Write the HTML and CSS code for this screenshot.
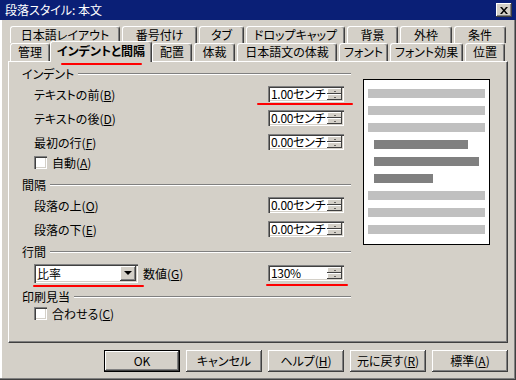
FILE: index.html
```html
<!DOCTYPE html>
<html lang="ja">
<head>
  <meta charset="UTF-8" />
  <title>段落スタイル: 本文</title>
  <link rel="stylesheet" href="styles.css">
</head>
<body>
  <div class="window">
    <div class="titlebar">
      <span class="title">段落スタイル: 本文</span>
      <span class="close">
        <svg width="8" height="7" viewBox="0 0 8 7"><path d="M0 0h2l2 2.5L6 0h2L5 3.5 8 7H6L4 4.5 2 7H0l3-3.5z" fill="#000"/></svg>
      </span>
    </div>

    <div class="tabs">
      <div class="tabrow back">
        <div class="tab">日本語レイアウト</div>
        <div class="tab">番号付け</div>
        <div class="tab">タブ</div>
        <div class="tab">ドロップキャップ</div>
        <div class="tab">背景</div>
        <div class="tab">外枠</div>
        <div class="tab">条件</div>
      </div>
      <div class="tabrow front">
        <div class="tab">管理</div>
        <div class="tab active mark">インデントと間隔</div>
        <div class="tab">配置</div>
        <div class="tab">体裁</div>
        <div class="tab">日本語文の体裁</div>
        <div class="tab">フォント</div>
        <div class="tab">フォント効果</div>
        <div class="tab">位置</div>
      </div>
    </div>

    <div class="panel">
      <div class="settings">
        <div class="group-title">インデント</div>
        <div class="row">
          <span class="label">テキストの前(<u>B</u>)</span>
          <div class="spin mark mark-first"><span class="value">1.00センチ</span><span class="arrows"><i class="up"></i><i class="down"></i></span></div>
        </div>
        <div class="row">
          <span class="label">テキストの後(<u>D</u>)</span>
          <div class="spin"><span class="value">0.00センチ</span><span class="arrows"><i class="up"></i><i class="down"></i></span></div>
        </div>
        <div class="row">
          <span class="label">最初の行(<u>F</u>)</span>
          <div class="spin"><span class="value">0.00センチ</span><span class="arrows"><i class="up"></i><i class="down"></i></span></div>
        </div>
        <div class="check-row">
          <span class="checkbox"></span>
          <span>自動(<u>A</u>)</span>
        </div>

        <div class="group-title gap-big">間隔</div>
        <div class="row">
          <span class="label">段落の上(<u>O</u>)</span>
          <div class="spin"><span class="value">0.00センチ</span><span class="arrows"><i class="up"></i><i class="down"></i></span></div>
        </div>
        <div class="row">
          <span class="label">段落の下(<u>E</u>)</span>
          <div class="spin"><span class="value">0.00センチ</span><span class="arrows"><i class="up"></i><i class="down"></i></span></div>
        </div>

        <div class="group-title gap-small">行間</div>
        <div class="row combo-row">
          <div class="combo mark mark-combo">
            <span class="value">比率</span>
            <span class="drop"><i></i></span>
          </div>
          <span class="label amount">数値(<u>G</u>)</span>
          <div class="spin mark mark-pct"><span class="value">130%</span><span class="arrows"><i class="up"></i><i class="down"></i></span></div>
        </div>

        <div class="group-title gap-small">印刷見当</div>
        <div class="check-row">
          <span class="checkbox"></span>
          <span>合わせる(<u>C</u>)</span>
        </div>
      </div>

      <div class="preview">
        <div class="bar"></div>
        <div class="bar"></div>
        <div class="bar"></div>
        <div class="bar dark b1"></div>
        <div class="bar dark b2"></div>
        <div class="bar dark b3"></div>
        <div class="bar"></div>
        <div class="bar"></div>
        <div class="bar"></div>
      </div>
    </div>

    <div class="buttons">
      <button class="btn default">OK</button>
      <button class="btn">キャンセル</button>
      <button class="btn">ヘルプ(<u>H</u>)</button>
      <button class="btn">元に戻す(<u>R</u>)</button>
      <button class="btn">標準(<u>A</u>)</button>
    </div>
  </div>
</body>
</html>
```

FILE: styles.css
```css
body {
  margin: 0;
  background: #d4d0c8;
  font-family: "Noto Sans CJK JP", "Noto Sans", sans-serif;
  font-size: 12px;
  font-feature-settings: "palt";
  color: #000;
}
u {
  text-decoration-thickness: 1px;
  text-underline-offset: 1px;
}
.window {
  width: 516px;
  height: 380px;
  box-sizing: border-box;
  background: #d4d0c8;
  box-shadow: inset -1px -1px #404040, inset -2px -2px #808080, inset 2px 0 #fff;
  overflow: hidden;
}
.titlebar {
  height: 20px;
  background: #0a1f76;
  color: #fff;
  display: flex;
  align-items: center;
  justify-content: space-between;
  padding: 0 5px;
}
.title {
  font-size: 12px;
  line-height: 14px;
}
.close {
  width: 16px;
  height: 14px;
  box-sizing: border-box;
  background: #d4d0c8;
  box-shadow: inset -1px -1px #404040, inset 1px 1px #fff, inset -2px -2px #808080;
  display: flex;
  align-items: center;
  justify-content: center;
  margin-right: -1px;
}

/* tabs */
.tabs {
  margin-top: 6px;
  margin-left: 10px;
}
.tabrow {
  display: grid;
  gap: 2px;
}
.tabrow.back {
  height: 17px;
  grid-template-columns: 110px 75px 45px 99px 51px 52px 52px;
}
.tabrow.front {
  height: 18px;
  grid-template-columns: 40px 98px 40px 41px 100px 49px 73px 40px;
  position: relative;
  z-index: 2;
}
.tab {
  box-sizing: border-box;
  border-top: 1px solid #fff;
  border-left: 1px solid #fff;
  border-right: 1px solid #404040;
  box-shadow: inset -1px 0 #808080;
  border-radius: 3px 3px 0 0;
  background: #d4d0c8;
  text-align: center;
  line-height: 16px;
  white-space: nowrap;
}
.tab.active {
  font-weight: bold;
  margin: -2px -2px -1px;
  line-height: 18px;
  position: relative;
}

/* main panel */
.panel {
  margin-left: 8px;
  width: 500px;
  height: 282px;
  box-sizing: border-box;
  border-top: 1px solid #fff;
  border-left: 1px solid #fff;
  border-right: 1px solid #404040;
  border-bottom: 1px solid #404040;
  box-shadow: inset -1px -1px #808080;
  padding: 4px 0 0 13px;
  display: flex;
  position: relative;
  z-index: 1;
}
.settings {
  width: 330px;
}
.group-title {
  display: flex;
  align-items: center;
  height: 16px;
  line-height: 16px;
}
.group-title::after {
  content: "";
  flex: 1;
  border-top: 1px solid #808080;
  border-bottom: 1px solid #fff;
  margin-left: 4px;
  margin-right: 1px;
}
.gap-big {
  margin-top: 7px;
}
.gap-small {
  margin-top: 3px;
}
.row {
  display: flex;
  align-items: center;
  height: 24px;
  padding: 0 8px 0 12px;
}
.row .label {
  flex: 1;
}
.combo-row {
  height: 26px;
}
.combo-row .label.amount {
  margin-left: 5px;
}
.check-row {
  display: flex;
  align-items: center;
  gap: 5px;
  height: 16px;
  padding-left: 12px;
}
.checkbox {
  width: 13px;
  height: 13px;
  box-sizing: border-box;
  background: #fff;
  box-shadow: inset 1px 1px #808080, inset 2px 2px #404040, inset -1px -1px #fff, inset -2px -2px #d4d0c8;
}

/* spin field */
.spin {
  width: 76px;
  height: 16px;
  box-sizing: border-box;
  background: #fff;
  box-shadow: inset 1px 1px #808080, inset 2px 2px #404040, inset -1px -1px #fff, inset -2px -2px #d4d0c8;
  display: flex;
  padding: 2px;
}
.spin .value {
  flex: 1;
  line-height: 12px;
  padding-left: 1px;
  letter-spacing: -0.3px;
}
.arrows {
  width: 15px;
  display: flex;
  flex-direction: column;
}
.arrows i {
  flex: 1;
  background: #d4d0c8;
  box-shadow: inset -1px -1px #404040, inset 1px 1px #fff;
  display: flex;
  align-items: center;
  justify-content: center;
}
.arrows i::before {
  content: "";
  border-left: 1px solid transparent;
  border-right: 1px solid transparent;
}
.arrows .up::before {
  border-bottom: 1px solid #000;
}
.arrows .down::before {
  border-top: 1px solid #000;
}

/* combo box */
.combo {
  width: 104px;
  height: 19px;
  box-sizing: border-box;
  background: #fff;
  box-shadow: inset 1px 1px #808080, inset 2px 2px #404040, inset -1px -1px #fff, inset -2px -2px #d4d0c8;
  display: flex;
  padding: 2px;
}
.combo .value {
  flex: 1;
  line-height: 15px;
  padding-left: 1px;
}
.drop {
  width: 16px;
  background: #d4d0c8;
  box-shadow: inset -1px -1px #404040, inset 1px 1px #fff, inset -2px -2px #808080;
  display: flex;
  align-items: center;
  justify-content: center;
}
.drop i {
  border-left: 4px solid transparent;
  border-right: 4px solid transparent;
  border-top: 4px solid #000;
  margin-left: -1px;
}

/* red annotation marks */
.mark {
  position: relative;
}
.mark::after {
  content: "";
  position: absolute;
  height: 2px;
  background: #ff0000;
  border-radius: 1px;
}
.tab.mark::after {
  left: 10px;
  right: 9px;
  bottom: -3px;
}
.mark-first::after {
  left: -11px;
  right: -9px;
  bottom: -3px;
}
.mark-combo::after {
  left: -1px;
  right: -6px;
  bottom: -4px;
}
.mark-pct::after {
  left: -2px;
  right: -4px;
  bottom: -5px;
}

/* preview */
.preview {
  width: 127px;
  height: 166px;
  box-sizing: border-box;
  margin: 13px 0 0 11px;
  border: 1px solid #000;
  background: #fff;
  padding: 9px 4px 0;
  display: flex;
  flex-direction: column;
  gap: 8px;
}
.bar {
  height: 9px;
  width: 117px;
  background: #c0c0c0;
  flex: none;
}
.bar.dark {
  background: #808080;
  margin-left: 6px;
}
.bar.b1 {
  width: 94px;
}
.bar.b2 {
  width: 105px;
}
.bar.b3 {
  width: 59px;
}

/* bottom buttons */
.buttons {
  display: flex;
  justify-content: flex-end;
  gap: 6px;
  margin-top: 7px;
  padding-right: 8px;
}
.btn {
  width: 76px;
  height: 22px;
  box-sizing: border-box;
  background: #d4d0c8;
  border: none;
  box-shadow: inset -1px -1px #404040, inset 1px 1px #fff, inset -2px -2px #808080;
  font-family: inherit;
  font-size: 12px;
  font-feature-settings: "palt";
  color: #000;
  padding: 0;
  line-height: 20px;
}
.btn.default {
  box-shadow: inset 0 0 0 1px #000, inset -2px -2px #404040, inset 2px 2px #fff, inset -3px -3px #808080;
}
```
